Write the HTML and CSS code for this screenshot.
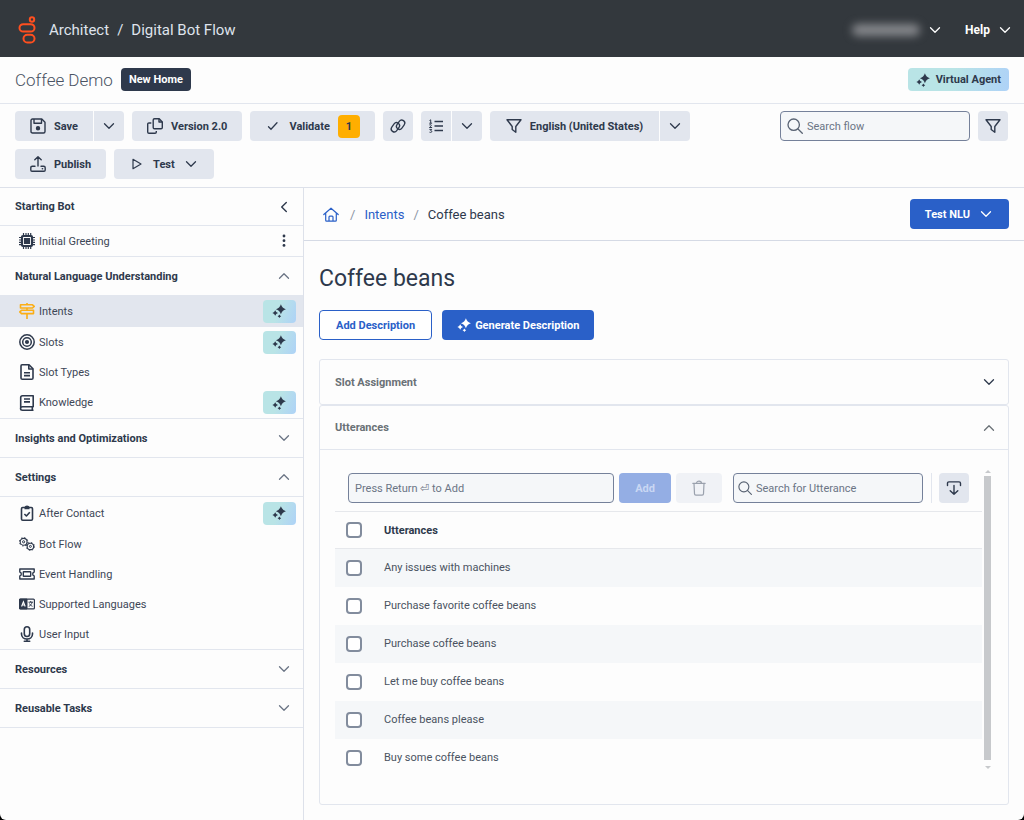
FILE: index.html
```html
<!DOCTYPE html>
<html lang="en">
<head>
    <meta charset="UTF-8">
    <meta name="viewport" content="width=device-width, initial-scale=1.0">
    <title>Architect / Digital Bot Flow</title>
    <link rel="stylesheet" href="styles.css">
</head>
<body>
    <!-- Shared icons -->
    <svg class="sprite" aria-hidden="true">
        <symbol id="down" viewBox="0 0 16 16"><path d="M3.500 5.800l4.500 4.500 4.500-4.500" fill="none" stroke="currentColor" stroke-width="1.3" stroke-linecap="round" stroke-linejoin="round"/></symbol>
        <symbol id="up" viewBox="0 0 16 16"><path d="M3.500 10.300l4.500-4.500 4.500 4.500" fill="none" stroke="currentColor" stroke-width="1.3" stroke-linecap="round" stroke-linejoin="round"/></symbol>
        <symbol id="sparkle" viewBox="0 0 16 16"><path fill="currentColor" d="M8.900 1.200q1.200 3.800 5 5-3.800 1.200-5 5-1.200-3.800-5-5 3.800-1.200 5-5zM3.200 7.200q.7 2.100 2.800 2.800-2.100.7-2.800 2.800-.7-2.100-2.800-2.800 2.100-.7 2.800-2.800zM7.400 11.400q.5 1.300 1.800 1.800-1.300.5-1.800 1.800-.5-1.300-1.800-1.800 1.300-.5 1.800-1.800z"/></symbol>
        <symbol id="funnel" viewBox="0 0 16 16"><path d="M1 1.700h14L9.800 8.500v5.800L6.200 11.500v-3z" fill="none" stroke="currentColor" stroke-width="1.400" stroke-linejoin="round"/></symbol>
        <symbol id="search" viewBox="0 0 16 16"><g fill="none" stroke="currentColor" stroke-width="1.300" stroke-linecap="round"><circle cx="6.700" cy="6.700" r="5.700"/><path d="M11 11l4.300 4.300"/></g></symbol>
    </svg>

    <div class="app">
        <header class="topbar">
            <svg class="logo" viewBox="0 0 18 28" fill="none" stroke="#ff4f1f" stroke-width="2">
                <circle cx="14" cy="3.500" r="2.200"/>
                <rect x="1.500" y="8.200" width="15" height="7.400" rx="3.700"/>
                <rect x="5.500" y="18.800" width="11" height="7.700" rx="3.800"/>
            </svg>
            <div class="product"><span>Architect</span><span>/</span><span>Digital Bot Flow</span></div>
            <button class="top-menu" aria-label="Account"><span class="account-name"></span><svg class="icon"><use href="#down"/></svg></button>
            <button class="top-menu">Help<svg class="icon"><use href="#down"/></svg></button>
        </header>

        <div class="titlebar">
            <h1 class="flow-name">Coffee Demo</h1>
            <span class="home-tag">New Home</span>
            <span class="agent-tag"><svg class="icon"><use href="#sparkle"/></svg>Virtual Agent</span>
        </div>

        <div class="toolbar">
            <div class="tools">
                <div class="split">
                    <button class="btn btn-save"><svg class="icon" viewBox="0 0 16 16" fill="none" stroke="currentColor" stroke-width="1.400" stroke-linejoin="round"><path d="M2.500 1h9.300L15 4.200v9.300c0 .9-.6 1.500-1.500 1.500h-11C1.600 15 1 14.400 1 13.500v-11C1 1.600 1.600 1 2.500 1z"/><path d="M4 1v4.200h7.500V1"/><circle cx="8" cy="10.300" r="1.500" fill="currentColor"/></svg>Save</button>
                    <button class="btn btn-arrow" aria-label="Save options"><svg class="icon"><use href="#down"/></svg></button>
                </div>
                <button class="btn btn-version"><svg class="icon" viewBox="0 0 16 16" fill="none" stroke="currentColor" stroke-width="1.400" stroke-linejoin="round"><path d="M7.500.8h4.700L15.300 4v5.500c0 .9-.5 1.300-1.300 1.300H7.500c-.9 0-1.300-.4-1.300-1.300V2.100C6.200 1.200 6.600.8 7.500.8z"/><path d="M12 .8V4h3.300"/><path d="M4.300 5H2C1.200 5 .7 5.500.7 6.300v7.600c0 .8.5 1.300 1.300 1.300h6c.8 0 1.300-.5 1.300-1.300v-1"/></svg>Version 2.0</button>
                <button class="btn btn-validate"><svg class="icon" viewBox="0 0 16 16" fill="none" stroke="currentColor" stroke-width="1.300" stroke-linecap="round"><path d="M3.500 8.700l2.500 2.500 6-6.400"/></svg>Validate<span class="count">1</span></button>
                <button class="btn btn-square" aria-label="Dependencies"><svg class="icon" viewBox="0 0 16 16" fill="none" stroke="currentColor" stroke-width="1.300" stroke-linecap="round"><rect x="-5" y="-3" width="10" height="6" rx="3" transform="translate(5.400 9.300) rotate(-55)"/><rect x="-5" y="-3" width="10" height="6" rx="3" transform="translate(10.600 6.700) rotate(-55)"/></svg></button>
                <div class="split">
                    <button class="btn btn-square" aria-label="Numbered list"><svg class="icon" viewBox="0 0 16 16" fill="none" stroke="currentColor" stroke-width="1.300"><path d="M6.500 3.500H15M6.500 8H15M6.500 12.500H15"/><path d="M1.500 2.500l1.200-.7v3.400M1.300 5.200h2.800M1.300 7c1.500-1 2.600 0 1.500 1.200L1.400 9.500h2.700M1.400 11.400h2.300l-1 1.200c1.500 0 1.500 2-.2 1.800l-1-.2" stroke-width="1"/></svg></button>
                    <button class="btn btn-arrow" aria-label="List options"><svg class="icon"><use href="#down"/></svg></button>
                </div>
                <div class="split">
                    <button class="btn btn-language"><svg class="icon"><use href="#funnel"/></svg>English (United States)</button>
                    <button class="btn btn-arrow" aria-label="Language options"><svg class="icon"><use href="#down"/></svg></button>
                </div>
                <button class="btn btn-publish"><svg class="icon" viewBox="0 0 16 16" fill="none" stroke="currentColor" stroke-width="1.400" stroke-linecap="round" stroke-linejoin="round"><path d="M8 10V1M4.800 3.800L8 .8l3.200 3M5 10.200H2.300c-.9 0-1.500.6-1.500 1.500V14c0 .7.400 1.200 1.200 1.200h12c.8 0 1.200-.5 1.200-1.200v-2.300c0-.9-.6-1.500-1.500-1.500H11"/><path d="M12.300 12.800h.3"/></svg>Publish</button>
                <button class="btn btn-test"><svg class="icon" viewBox="0 0 16 16" fill="none" stroke="currentColor" stroke-width="1.200" stroke-linejoin="round"><path d="M4 3.300v9.400L12 8z"/></svg>Test<svg class="icon"><use href="#down"/></svg></button>
            </div>
            <div class="flow-search">
                <label class="field"><svg class="icon"><use href="#search"/></svg><input type="text" placeholder="Search flow" aria-label="Search flow"></label>
                <button class="btn btn-square" aria-label="Filter"><svg class="icon"><use href="#funnel"/></svg></button>
            </div>
        </div>

        <div class="workspace">
            <nav class="sidebar">
                <button class="group group-first">Starting Bot<svg class="icon" viewBox="0 0 16 16" fill="none" stroke="currentColor" stroke-width="1.400" stroke-linecap="round" stroke-linejoin="round"><path d="M10.300 3.500L5.700 8l4.600 4.500"/></svg></button>
                <ul class="items">
                    <li><a href="#" class="item"><svg class="icon" viewBox="0 0 16 16" fill="none" stroke="currentColor"><rect x="3" y="3" width="10" height="10" rx="1" stroke-width="2.200"/><rect x="5" y="5" width="6" height="6" fill="currentColor" stroke="none"/><path d="M4.500 0v3M7 0v3M9.300 0v3M11.700 0v3M4.500 13v3M7 13v3M9.300 13v3M11.700 13v3M0 4.500h3M0 7h3M0 9.300h3M0 11.700h3M13 4.500h3M13 7h3M13 9.300h3M13 11.700h3" stroke-width="1.200"/></svg>Initial Greeting</a>
                    <button class="more" aria-label="More"><svg class="icon" viewBox="0 0 16 16" fill="currentColor"><circle cx="8" cy="3" r="1.400"/><circle cx="8" cy="7.700" r="1.400"/><circle cx="8" cy="12.400" r="1.400"/></svg></button></li>
                </ul>
                <button class="group">Natural Language Understanding<svg class="icon"><use href="#up"/></svg></button>
                <ul class="items items-nlu">
                    <li class="active"><a href="#" class="item"><svg class="icon icon-intents" viewBox="0 0 16 16" fill="none" stroke="currentColor" stroke-width="1.600" stroke-linejoin="round"><path d="M1.500 1.800h12l1.700 1.600L13.500 5h-12zM14.500 7.300h-12L.8 8.900l1.700 1.700h12zM8 0v1.800M8 5v2.300M8 10.600V16"/></svg>Intents</a><span class="ai"><svg class="icon"><use href="#sparkle"/></svg></span></li>
                    <li><a href="#" class="item"><svg class="icon" viewBox="0 0 16 16" fill="none" stroke="currentColor" stroke-width="1.500"><circle cx="8" cy="8" r="7.200"/><circle cx="8" cy="8" r="4.300"/><circle cx="8" cy="8" r="1.300" fill="currentColor"/></svg>Slots</a><span class="ai"><svg class="icon"><use href="#sparkle"/></svg></span></li>
                    <li><a href="#" class="item"><svg class="icon" viewBox="0 0 16 16" fill="none" stroke="currentColor" stroke-width="1.600" stroke-linejoin="round"><path d="M3 .8h7l4 4v9.100c0 .8-.5 1.300-1.300 1.300H3.300c-.8 0-1.300-.5-1.300-1.300V2c0-.7.400-1.200 1-1.200z"/><path d="M9.800.8V5H14M5 8.700h6M5 11.600h6"/></svg>Slot Types</a></li>
                    <li><a href="#" class="item"><svg class="icon" viewBox="0 0 16 16" fill="none" stroke="currentColor" stroke-width="1.600" stroke-linejoin="round"><path d="M3.500.8h10.700v11H3.500c-2.600 0-2.600 3.400 0 3.400h11M1.700 13.500V2.600C1.700 1.400 2.400.8 3.500.8M13.300 12v3"/><path d="M5 4h6M5 6.900h6"/></svg>Knowledge</a><span class="ai"><svg class="icon"><use href="#sparkle"/></svg></span></li>
                </ul>
                <button class="group">Insights and Optimizations<svg class="icon"><use href="#down"/></svg></button>
                <button class="group">Settings<svg class="icon"><use href="#up"/></svg></button>
                <ul class="items items-settings">
                    <li><a href="#" class="item"><svg class="icon" viewBox="0 0 16 16" fill="none" stroke="currentColor" stroke-width="1.600" stroke-linejoin="round"><rect x="2.500" y="2.500" width="11" height="12.700" rx="1.200"/><path d="M5.500 2.800C5.500-.2 10.500-.2 10.500 2.800v1.400h-5z" fill="currentColor" stroke="none"/><path d="M5.400 9l2 2 3.400-3.800"/></svg>After Contact</a><span class="ai"><svg class="icon"><use href="#sparkle"/></svg></span></li>
                    <li><a href="#" class="item"><svg class="icon" viewBox="0 0 16 16" fill="none" stroke="currentColor"><circle cx="4.600" cy="5.800" r="3.400" stroke-width="1.100"/><circle cx="4.600" cy="5.800" r="1.100"/><circle cx="4.600" cy="5.800" r="4.200" stroke-dasharray="1.500 1.800"/><circle cx="11.400" cy="10.400" r="3.200" stroke-width="1.100"/><circle cx="11.400" cy="10.400" r="1"/><circle cx="11.400" cy="10.400" r="4" stroke-dasharray="1.500 1.642"/></svg>Bot Flow</a></li>
                    <li><a href="#" class="item"><svg class="icon" viewBox="0 0 16 16" fill="none" stroke="currentColor" stroke-width="1.400" stroke-linejoin="round"><path d="M.8 3h14.400v3c-2 .4-2 3.600 0 4v3H.8v-3c2-.4 2-3.600 0-4z"/><rect x="4.300" y="5.700" width="7.400" height="4.600" rx=".5"/></svg>Event Handling</a></li>
                    <li><a href="#" class="item"><svg class="icon" viewBox="0 0 16 16" fill="none" stroke="currentColor"><rect x=".6" y="3.100" width="14.800" height="9.800" rx="1" stroke-width="1.200"/><path d="M.6 3.100H8v9.800H.6z" fill="currentColor"/><path d="M2.600 10.500L4.400 5.700l1.800 4.800M3.300 9h2.300" stroke="#fff" stroke-width="1.100"/><path d="M9.500 6.200h4.500M11.700 5v1.200M13 6.200c-.3 2-1.500 3.400-3.200 4.200M10.500 7.500c.5 1.300 1.600 2.200 3 2.800"/></svg>Supported Languages</a></li>
                    <li><a href="#" class="item"><svg class="icon" viewBox="0 0 16 16" fill="none" stroke="currentColor" stroke-width="1.600" stroke-linecap="round"><rect x="5.300" y=".8" width="5.400" height="9.700" rx="2.700"/><path d="M2.500 7v1c0 3 2.400 5 5.500 5s5.500-2 5.500-5V7M8 13v2M5.300 15.200h5.400"/></svg>User Input</a></li>
                </ul>
                <button class="group">Resources<svg class="icon"><use href="#down"/></svg></button>
                <button class="group">Reusable Tasks<svg class="icon"><use href="#down"/></svg></button>
            </nav>

            <main class="main">
                <div class="crumbs">
                    <a href="#" class="home" aria-label="Home"><svg class="icon" viewBox="0 0 16 16" fill="none" stroke="currentColor" stroke-width="1.200" stroke-linejoin="round" stroke-linecap="round"><path d="M.8 8.500L8 2.200 15.200 8.500M2.700 7v7.200c0 .6.300.9.900.9h8.800c.6 0 .9-.3.900-.9V7M6 15.100V11c0-.6.300-.9.900-.9h2.200c.6 0 .9.300.9.900v4.100"/></svg></a>
                    <span class="slash">/</span><a href="#">Intents</a><span class="slash">/</span><span>Coffee beans</span>
                    <button class="btn btn-primary btn-nlu">Test NLU<svg class="icon"><use href="#down"/></svg></button>
                </div>
                <div class="content">
                    <h2 class="intent-name">Coffee beans</h2>
                    <div class="actions">
                        <button class="btn btn-outline">Add Description</button>
                        <button class="btn btn-primary btn-generate"><svg class="icon"><use href="#sparkle"/></svg>Generate Description</button>
                    </div>

                    <section class="panel">
                        <button class="panel-head">Slot Assignment<svg class="icon icon-dark"><use href="#down"/></svg></button>
                    </section>
                    <section class="panel panel-grow">
                        <button class="panel-head">Utterances<svg class="icon"><use href="#up"/></svg></button>
                        <div class="panel-body">
                            <div class="utterances">
                                <div class="utterance-tools">
                                    <label class="field field-add"><input type="text" placeholder="Press Return ⏎ to Add" aria-label="New utterance"></label>
                                    <button class="btn btn-primary btn-add" disabled>Add</button>
                                    <button class="btn btn-delete" disabled aria-label="Delete"><svg class="icon" viewBox="0 0 16 16" fill="none" stroke="currentColor" stroke-width="1.200" stroke-linecap="round" stroke-linejoin="round"><path d="M1.800 3.300h12.400M5.500 3.300c0-3 5-3 5 0M3 3.500l.5 10.300c0 .9.500 1.400 1.400 1.400h6.200c.9 0 1.400-.5 1.400-1.400L13 3.500"/></svg></button>
                                    <label class="field field-find"><svg class="icon"><use href="#search"/></svg><input type="text" placeholder="Search for Utterance" aria-label="Search for Utterance"></label>
                                    <span class="divider"></span>
                                    <button class="btn btn-square" aria-label="Import"><svg class="icon" viewBox="0 0 16 16" fill="none" stroke="currentColor" stroke-width="1.400" stroke-linecap="round" stroke-linejoin="round"><path d="M1.500 5.500V3.300c0-.9.500-1.400 1.400-1.400h10.200c.9 0 1.400.5 1.400 1.400v2.200M8 5.500v8.700M4.200 10.700L8 14.300l3.800-3.600"/></svg></button>
                                </div>
                                <table class="grid">
                                    <thead>
                                        <tr><th class="check"><input type="checkbox" aria-label="Select all"></th><th>Utterances</th></tr>
                                    </thead>
                                    <tbody>
                                        <tr><td class="check"><input type="checkbox" id="u1"></td><td><label for="u1">Any issues with machines</label></td></tr>
                                        <tr><td class="check"><input type="checkbox" id="u2"></td><td><label for="u2">Purchase favorite coffee beans</label></td></tr>
                                        <tr><td class="check"><input type="checkbox" id="u3"></td><td><label for="u3">Purchase coffee beans</label></td></tr>
                                        <tr><td class="check"><input type="checkbox" id="u4"></td><td><label for="u4">Let me buy coffee beans</label></td></tr>
                                        <tr><td class="check"><input type="checkbox" id="u5"></td><td><label for="u5">Coffee beans please</label></td></tr>
                                        <tr><td class="check"><input type="checkbox" id="u6"></td><td><label for="u6">Buy some coffee beans</label></td></tr>
                                    </tbody>
                                </table>
                            </div>
                            <div class="scrollbar" aria-hidden="true"><span class="arrow-up"></span><span class="thumb"></span><span class="arrow-down"></span></div>
                        </div>
                    </section>
                </div>
            </main>
        </div>
    </div>
</body>
</html>
```

FILE: styles.css
```css
* {
    box-sizing: border-box;
}

body {
    margin: 0;
    background: #000;
    color: #2e394c;
    font-family: Roboto, "Liberation Sans", sans-serif;
    font-size: 11px;
}

button,
input {
    font: inherit;
    color: inherit;
}

button {
    border: 0;
    padding: 0;
    background: none;
    cursor: pointer;
}

a {
    color: #2a60c8;
    text-decoration: none;
}

.sprite {
    display: none;
}

.icon {
    width: 16px;
    height: 16px;
    flex: none;
}

.app {
    display: flex;
    flex-direction: column;
    min-height: 100vh;
    background: #fdfdfd;
    border-radius: 0 0 6px 6px;
    overflow: hidden;
}

/* Top bar */
.topbar {
    display: flex;
    align-items: center;
    height: 57px;
    padding: 2px 11px 0 18px;
    background: #33383d;
    color: #fff;
}

.logo {
    width: 18px;
    height: 28px;
}

.product {
    display: flex;
    gap: 8px;
    margin-left: 13px;
    margin-right: auto;
    color: #dfe3ec;
    font-size: 15px;
}

.top-menu {
    display: flex;
    align-items: center;
    gap: 7px;
    margin-left: 22px;
    padding: 4px 0;
    font-size: 12px;
    font-weight: 700;
}

.account-name {
    width: 68px;
    height: 12px;
    border-radius: 6px;
    background: #85878b;
    filter: blur(4px);
}

/* Flow title */
.titlebar {
    display: flex;
    align-items: center;
    gap: 8px;
    height: 47px;
    padding: 0 15px 1px;
    border-bottom: 1px solid #e2e6ee;
}

.flow-name {
    margin: 0;
    color: #4a5363;
    font-size: 17px;
    font-weight: 300;
}

.home-tag,
.agent-tag {
    display: flex;
    align-items: center;
    height: 23px;
    padding: 0 8px;
    border-radius: 4px;
    font-weight: 700;
}

.home-tag {
    background: #2e394c;
    color: #fff;
}

.agent-tag {
    gap: 4px;
    margin-left: auto;
    background: linear-gradient(100deg, #b9e4e6 45%, #aed2f7);
}

/* Toolbar */
.toolbar {
    display: flex;
    align-items: flex-start;
    gap: 8px;
    padding: 7px 16px 8px 15px;
    border-bottom: 1px solid #dde1ea;
}

.tools {
    display: flex;
    flex: 1;
    flex-wrap: wrap;
    gap: 8px;
}

.split {
    display: flex;
    gap: 1px;
}

.split .btn:first-child {
    border-radius: 4px 0 0 4px;
}

.split .btn:last-child {
    border-radius: 0 4px 4px 0;
}

.btn {
    display: flex;
    align-items: center;
    justify-content: center;
    gap: 8px;
    height: 30px;
    padding: 0 15px;
    border-radius: 4px;
    background: #e2e6ee;
    font-weight: 700;
    white-space: nowrap;
}

.btn-arrow,
.btn-square {
    width: 30px;
    padding: 0;
}

.btn-language {
    padding: 0 16px;
}

.count {
    display: flex;
    align-items: center;
    justify-content: center;
    width: 22px;
    height: 23px;
    border-radius: 4px;
    background: #ffae00;
}

.flow-search {
    display: flex;
    gap: 8px;
}

.field {
    display: flex;
    align-items: center;
    gap: 4px;
    width: 190px;
    height: 30px;
    padding: 0 6px;
    border: 1px solid #75819a;
    border-radius: 4px;
    background: #f5f7f9;
    color: #596373;
}

.field input {
    width: 100%;
    min-width: 0;
    padding: 0;
    border: 0;
    outline: 0;
    background: none;
}

.field input::placeholder {
    color: #6b7585;
    opacity: 1;
}

/* Sidebar */
.workspace {
    display: flex;
    flex: 1;
}

.sidebar {
    width: 304px;
    flex: none;
    border-right: 1px solid #dde1ea;
}

.group {
    display: flex;
    align-items: center;
    justify-content: space-between;
    width: 100%;
    height: 39px;
    padding: 0 11px 0 15px;
    border-bottom: 1px solid #e2e6ee;
    font-weight: 700;
}

.group .icon {
    color: #6b7585;
}

.group-first {
    height: 38px;
}

.group-first .icon {
    color: #2e394c;
}

.items {
    display: flex;
    flex-direction: column;
    margin: 0;
    padding: 0;
    border-bottom: 1px solid #e2e6ee;
    list-style: none;
}

.items-nlu {
    min-height: 123px;
}

.items-settings {
    min-height: 153px;
}

.items li {
    display: flex;
    flex: 1;
    align-items: center;
    min-height: 30px;
    padding: 0 7px 0 19px;
}

.items .active {
    background: #e2e6ee;
}

.item {
    display: flex;
    flex: 1;
    align-items: center;
    gap: 4px;
    color: #3d4757;
}

.item .icon {
    color: #2e394c;
}

.item .icon-intents {
    color: #fbae17;
}

.more {
    display: flex;
    margin-right: 4px;
}

.ai {
    display: flex;
    align-items: center;
    justify-content: center;
    width: 33px;
    height: 23px;
    border-radius: 4px;
    background: linear-gradient(110deg, #b9e4e6 45%, #aed2f7);
}

/* Main area */
.main {
    display: flex;
    flex: 1;
    flex-direction: column;
    min-width: 0;
}

.crumbs {
    display: flex;
    align-items: center;
    gap: 9px;
    height: 53px;
    padding: 0 15px 0 19px;
    border-bottom: 1px solid #d5dae5;
    font-size: 13px;
}

.crumbs a {
    display: flex;
}

.crumbs .home {
    margin-right: 2px;
}

.slash {
    color: #8c95a5;
}

.btn-primary {
    background: #2a60c8;
    color: #fff;
}

.btn-nlu {
    margin-left: auto;
    font-size: 11px;
}

.content {
    display: flex;
    flex: 1;
    flex-direction: column;
    padding: 24px 15px 15px;
}

.intent-name {
    margin: 0;
    font-size: 23px;
    font-weight: 400;
    line-height: 28px;
}

.actions {
    display: flex;
    gap: 10px;
    margin: 17px 0 19px;
}

.btn-outline {
    padding: 0 16px;
    border: 1px solid #2a60c8;
    background: #fff;
    color: #2a60c8;
}

.btn-generate {
    gap: 2px;
}

.panel {
    border: 1px solid #e2e6ee;
    border-radius: 3px;
}

.panel-grow {
    display: flex;
    flex: 1;
    flex-direction: column;
}

.panel-head {
    display: flex;
    align-items: center;
    justify-content: space-between;
    width: 100%;
    height: 44px;
    padding: 0 11px 0 15px;
    color: #6a7176;
    font-weight: 700;
}

.panel-grow .panel-head {
    border-bottom: 1px solid #e2e6ee;
}

.icon-dark {
    color: #2e394c;
}

.panel-body {
    display: flex;
    gap: 2px;
    padding: 20px 17px 26px 15px;
}

.utterances {
    flex: 1;
    min-width: 0;
}

.utterance-tools {
    display: flex;
    align-items: center;
    gap: 5px;
    padding: 3px 13px 8px;
}

.field-add {
    flex: 1;
}

.btn-add {
    padding: 0 16px;
    background: #94aee4;
    color: #c9d7f3;
}

.btn-delete {
    background: #f0f2f6;
    color: #9aa1ad;
}

.field-find {
    margin-left: 6px;
    padding: 0 4px;
}

.field-find .icon {
    width: 14px;
    height: 14px;
}

.divider {
    width: 1px;
    height: 30px;
    margin: 0 2px 0 3px;
    background: #e2e6ee;
}

/* Utterance list */
.grid {
    width: 100%;
    border-collapse: collapse;
}

.grid th,
.grid td {
    height: 38px;
    padding: 0;
    text-align: left;
}

.grid th {
    height: 37px;
    border-top: 1px solid #e6e8ec;
    border-bottom: 1px solid #e6e8ec;
}

.grid td {
    color: #4a5361;
}

.grid .check {
    width: 49px;
    padding-left: 11px;
}

.grid tbody tr:nth-child(odd) {
    background: #f5f7f9;
}

.grid input {
    display: block;
    width: 16px;
    height: 16px;
    margin: 0;
    appearance: none;
    border: 2px solid #828c9d;
    border-radius: 4px;
    background: #fff;
}

.grid input:checked {
    background: #2a60c8;
}

.scrollbar {
    display: flex;
    flex-direction: column;
    align-items: center;
    width: 7px;
    gap: 3px;
    margin-bottom: 8px;
}

.thumb {
    flex: 1;
    width: 7px;
    background: #c7c9cc;
}

.arrow-up,
.arrow-down {
    border: 3px solid transparent;
}

.arrow-up {
    border-top: 0;
    border-bottom-color: #c7c9cc;
}

.arrow-down {
    margin-top: 3px;
    border-bottom: 0;
    border-top-color: #c7c9cc;
}
```
